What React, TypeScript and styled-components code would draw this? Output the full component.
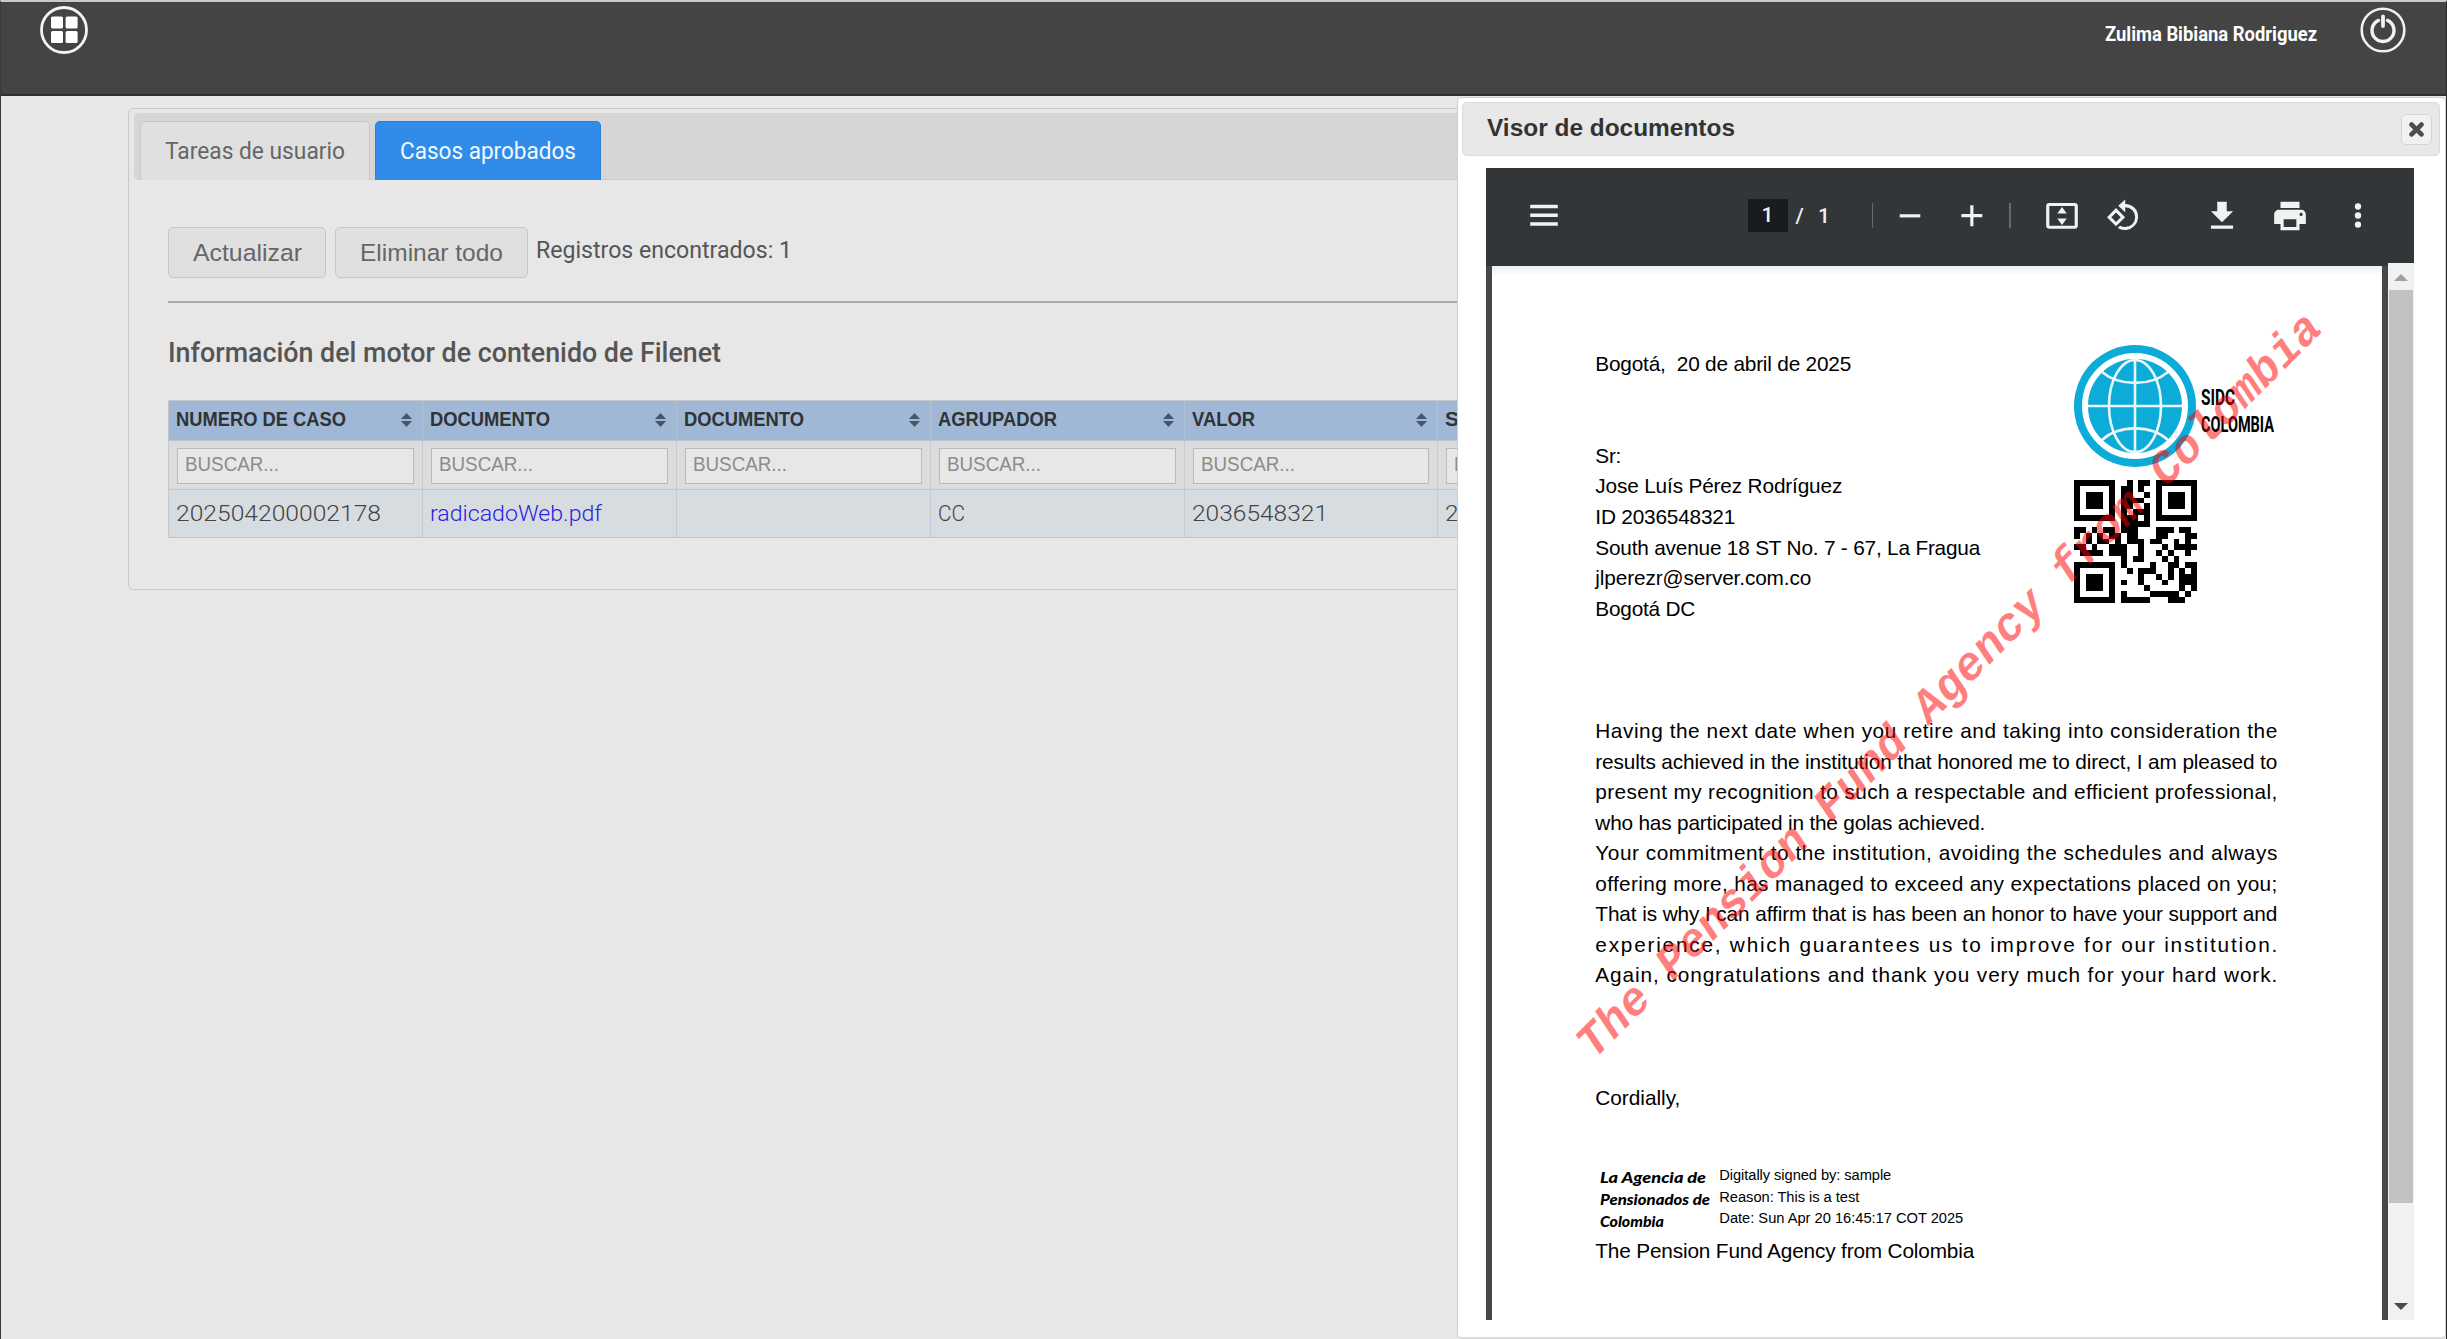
import React, { useLayoutEffect, useRef, useState } from 'react';
import styled, { createGlobalStyle, css } from 'styled-components';

const ARIAL = `'Liberation Sans', Arial, sans-serif`;
const UI = `Roboto, 'Titillium Web', sans-serif`;

const GlobalStyle = createGlobalStyle`
  * { box-sizing: border-box; }
  body { margin: 0; background: #e7e7e7; font-family: ${UI}; overflow: hidden; }
`;

/* ---------- text that fills a given measure ---------- */

const FitBox = styled.span<{ $w: number }>`
  display: inline-block;
  width: ${(p) => p.$w}px;
  white-space: pre;
`;
const FitInner = styled.span`
  display: inline-block;
  transform-origin: 0 50%;
`;

type FitProps = { w: number; mode?: 'scale' | 'space'; children: string };

function Fit({ w, mode = 'scale', children }: FitProps) {
  const ref = useRef<HTMLSpanElement>(null);
  const [style, setStyle] = useState<React.CSSProperties>({});
  useLayoutEffect(() => {
    const natural = ref.current!.getBoundingClientRect().width;
    setStyle(
      mode === 'scale'
        ? { transform: `scaleX(${w / natural})` }
        : { letterSpacing: `${(w - natural) / (children.length - 1)}px` },
    );
  }, []);
  return (
    <FitBox $w={w}>
      <FitInner ref={ref} style={style}>{children}</FitInner>
    </FitBox>
  );
}

/* ---------- shell ---------- */

const Screen = styled.div`
  position: relative;
  width: 2447px;
  height: 1339px;
  display: flex;
  flex-direction: column;
  overflow: hidden;
  background: #e7e7e7;
  border-left: 1px solid #3a3a3a;
  border-right: 1px solid #2a2a2a;
  border-top: 2px solid #c6cac9;
`;
const TopBar = styled.header`
  height: 94px;
  flex: none;
  display: flex;
  justify-content: space-between;
  padding: 3px 39px 0 38px;
  background: #444;
  border-bottom: 2px solid #2f2f2f;
`;
const Account = styled.div`
  display: flex;
  gap: 42px;
`;
const UserName = styled.div`
  padding-top: 16px;
  color: #fff;
  font: 700 20px/26px ${UI};
`;

const Main = styled.main`
  flex: 1;
  padding: 12px 0 0 127px;
`;
const Panel = styled.section`
  width: 2280px;
  height: 482px;
  padding: 4px 4px 4px 5px;
  border: 1.5px solid #c9c9c9;
  border-radius: 5px;
`;
const TabBar = styled.nav`
  height: 67px;
  display: flex;
  gap: 5px;
  padding: 8px 6px 0;
  background: #d6d6d6;
  border-bottom: 1px solid #cbcbcb;
  border-radius: 5px;
`;
const Tab = styled.button<{ $active?: boolean; $w: number }>`
  width: ${(p) => p.$w}px;
  height: 59px;
  padding: 0 0 0 24px;
  text-align: left;
  font: 400 23px/57px ${UI};
  border: 1px solid #c8c8c8;
  border-bottom: 0;
  border-radius: 5px 5px 0 0;
  background: #e0e0e0;
  color: #666;
  ${(p) => p.$active && css`
    background: #308ce8;
    border-color: #2a7fdc;
    color: #f4f8fc;
  `}
`;
const TabBody = styled.div`
  padding: 47px 0 0 34px;
`;
const Actions = styled.div`
  display: flex;
  height: 51px;
  gap: 9px;
`;
const Button = styled.button<{ $w: number }>`
  width: ${(p) => p.$w}px;
  height: 51px;
  padding: 0 0 0 24px;
  text-align: left;
  font: 400 24.5px/46px ${ARIAL};
  color: #666;
  background: #e0e0e0;
  border: 1.5px solid #c6c6c6;
  border-radius: 5px;
`;
const Count = styled.div`
  margin-left: -1px;
  font: 400 23px/48px ${UI};
  color: #555;
`;
const Divider = styled.hr`
  height: 2px;
  margin: 23px 0 0;
  border: 0;
  background: #ababab;
`;
const Heading = styled.h2`
  margin: 33px 0 0;
  height: 64px;
  font: 500 28px/34px ${UI};
  color: #555;
`;

/* ---------- case table ---------- */

const Table = styled.div`
  width: 2031px;
  border-left: 1px solid #c3c8cc;
  border-top: 1px solid #c3c8cc;
`;
const Row = styled.div<{ $h: number; $bg: string; $line: string }>`
  display: grid;
  grid-template-columns: repeat(8, 253.9px);
  height: ${(p) => p.$h}px;
  background: ${(p) => p.$bg};
  border-bottom: 1px solid ${(p) => p.$line};
`;
const HeadCell = styled.div`
  display: flex;
  justify-content: space-between;
  align-items: flex-start;
  padding: 0 9px 0 7px;
  border-right: 1px solid #b3c2d1;
  font: 700 19.5px/36px ${ARIAL};
  color: #2f3336;
  svg { margin-top: 12px; }
`;
const FilterCell = styled.div`
  padding: 7px 8px 0;
  border-right: 1px solid #cacaca;
`;
const FilterField = styled.div`
  height: 36px;
  padding-left: 7px;
  font: 400 19.5px/31px ${ARIAL};
  color: #8c8c8c;
  background: #e7e7e7;
  border: 1.5px solid #b9b9b9;
`;
const DataCell = styled.div<{ $link?: boolean }>`
  padding-left: 7px;
  border-right: 1px solid #c5cacf;
  font: 300 22.5px/46px ${UI};
  color: ${(p) => (p.$link ? '#2a22e0' : '#444')};
`;

/* ---------- document viewer ---------- */

const Dialog = styled.aside`
  position: absolute;
  top: 95px;
  right: 0;
  width: 989px;
  height: 1242px;
  padding: 4px;
  background: #fff;
  border: 1px solid #cfcfcf;
  border-bottom: 2px solid #dcdcdc;
  border-radius: 5px;
`;
const TitleBar = styled.div`
  width: 978px;
  height: 54px;
  display: flex;
  justify-content: space-between;
  padding: 11px 7px 0 24px;
  background: #e8e8e8;
  border: 1px solid #dcdcdc;
  border-radius: 5px;
`;
const Title = styled.h1`
  margin: 0;
  font: 700 24px/28px ${ARIAL};
  color: #333;
`;
const CloseButton = styled.button`
  width: 31px;
  height: 31px;
  padding: 0;
  display: grid;
  place-items: center;
  background: #f1f1f1;
  border: 1px solid #d5d5d5;
  border-radius: 5px;
`;
const Viewer = styled.div`
  width: 928px;
  height: 1152px;
  margin: 12px 0 0 24px;
  display: flex;
  flex-direction: column;
  background: #474747;
`;
const Toolbar = styled.div`
  height: 98px;
  flex: none;
  display: flex;
  align-items: center;
  padding: 0 0 3px 38.5px;
  background: #323639;
  color: #f1f1f1;
  font: 500 21px/32px ${UI};
`;
const Slot = styled.div<{ $gap: number; $w?: number }>`
  width: ${(p) => p.$w ?? 38}px;
  height: 38px;
  margin-left: ${(p) => p.$gap}px;
  flex: none;
`;
const PageInput = styled.div`
  width: 40px;
  height: 33px;
  margin-left: 185px;
  background: #191b1c;
  text-align: center;
`;
const PageTotal = styled.div`
  width: 75px;
  padding-left: 8px;
  word-spacing: 9px;
`;
const Bar = styled.div<{ $gap: number }>`
  width: 1.5px;
  height: 25px;
  margin-left: ${(p) => p.$gap}px;
  background: #666a6d;
`;
const Content = styled.div`
  flex: 1;
  display: flex;
  padding-left: 6px;
`;
const Page = styled.article`
  position: relative;
  width: 890px;
  padding: 83.3px 0 0 103.3px;
  background: linear-gradient(#eceeee, #fff 10px);
  font: 400 20.8px/30.56px ${ARIAL};
  color: #000;
`;
const ScrollBar = styled.div`
  width: 26px;
  margin: -3px 0 0 6px;
  display: flex;
  flex-direction: column;
  align-items: center;
  justify-content: space-between;
  padding: 11px 0 10px;
  background: #f0f1f1;
`;
const Thumb = styled.div`
  width: 24px;
  height: 913px;
  margin: 9px 0 auto;
  background: #c0c1c0;
`;
const Arrow = styled.div<{ $down?: boolean }>`
  width: 14px;
  height: 7px;
  background: ${(p) => (p.$down ? '#4b4b4b' : '#a0a0a0')};
  clip-path: ${(p) => (p.$down ? 'polygon(0 0, 100% 0, 50% 100%)' : 'polygon(50% 0, 100% 100%, 0 100%)')};
`;

const TopBlock = styled.div`
  display: flex;
  height: 366.7px;
`;
const Address = styled.div`
  width: 479px;
`;
const Line = styled.div`
  height: 30.56px;
  white-space: pre;
`;
const Brand = styled.div`
  margin-top: -4px;
`;
const LogoRow = styled.div`
  display: flex;
  gap: 5px;
  height: 135px;
`;
const LogoText = styled.div`
  padding-top: 38.5px;
  font: 700 22px/27.6px ${UI};
`;
const Body = styled.div`
  height: 366.7px;
`;
const Signature = styled.div`
  display: flex;
  gap: 14px;
  height: 65px;
  margin: 52px 0 6px;
  padding-left: 5px;
`;
const Seal = styled.div`
  width: 110px;
  padding-top: 1px;
  font: italic 900 15.5px/22px 'Comic Sans MS', Lato, sans-serif;
`;
const SignInfo = styled.div`
  margin-left: -5px;
  font: 400 14.7px/21.5px ${ARIAL};
`;
const Watermark = styled.div`
  position: absolute;
  left: 102px;
  top: 756px;
  font: italic 700 46.5px/52px 'Liberation Mono', 'Courier New', monospace;
  color: rgba(255, 0, 0, 0.5);
  white-space: pre;
  transform-origin: 0 38px;
  transform: rotate(-45deg);
`;

/* ---------- drawings ---------- */

const AppsIcon = () => (
  <svg width="50" height="50" viewBox="0 0 50 50">
    <circle cx="25" cy="25" r="22.5" fill="none" stroke="#f4f4f4" strokeWidth="2.8" />
    <g fill="#fff">
      <rect x="12" y="11.5" width="12" height="12" rx="1.5" />
      <rect x="26.6" y="11.5" width="12" height="12" rx="1.5" />
      <rect x="12" y="26" width="12" height="12" rx="1.5" />
      <rect x="26.6" y="26" width="12" height="12" rx="1.5" />
    </g>
  </svg>
);

const PowerIcon = () => (
  <svg width="48" height="50" viewBox="0 0 48 50" fill="none" stroke="#f1f1f1">
    <circle cx="24" cy="25" r="21.3" strokeWidth="2.6" />
    <path d="M19.5 15.4a11 11 0 1 0 9 0" strokeWidth="3.4" strokeLinecap="round" />
    <path d="M24 11.5v9.5" strokeWidth="3.8" strokeLinecap="round" />
  </svg>
);

const CloseIcon = () => (
  <svg width="15" height="15" viewBox="0 0 14 14" stroke="#4c4c4c" strokeWidth="4.4" strokeLinecap="round">
    <path d="M2.4 2.4l9.2 9.2M11.6 2.4l-9.2 9.2" />
  </svg>
);

const SortIcon = () => (
  <svg width="13" height="14" viewBox="0 0 13 14" fill="#42576b">
    <path d="M6.5 0L12 6H1zM1 8h11L6.5 14z" />
  </svg>
);

const glyphs: Record<string, string> = {
  menu: 'M3.3 4.9h17.4v2.2H3.3zM3.3 10.4h17.4v2.2H3.3zM3.3 15.9h17.4v2.2H3.3z',
  minus: 'M5.5 10.9h13v2h-13z',
  plus: 'M18.5 12.8h-5.6v5.7h-2v-5.7H5.3v-2h5.6V5.2h2v5.6h5.6z',
  fit: 'M4 3.8h16a2 2 0 0 1 2 2V18a2 2 0 0 1-2 2H4a2 2 0 0 1-2-2V5.8a2 2 0 0 1 2-2zM4 5.7v12.4h16V5.7zM12 6.3l3 4.1H9zM9 13.5h6l-3 4.2z',
  rotate:
    'M7.6 7L1.9 12.8l5.7 5.7 5.7-5.7zM4.6 12.8l3-3 3 3-3 3zM19.1 6.7A8.1 8.1 0 0 0 13.4 4.4V1.6L9 5.5l4.4 4.2V6.4a6.3 6.3 0 0 1 0 12.6c-1.2 0-2.3-.3-3.3-.8l-1.4 1.4a8.2 8.2 0 0 0 10.4-1.3 8.2 8.2 0 0 0 0-11.6z',
  download: 'M19 9h-4V3H9v6H5l7 7 7-7zM5 18v2h14v-2H5z',
  print:
    'M19 8H5c-1.66 0-3 1.34-3 3v6h4v4h12v-4h4v-6c0-1.66-1.34-3-3-3zm-3 11H8v-5h8v5zm3-7c-.55 0-1-.45-1-1s.45-1 1-1 1 .45 1 1-.45 1-1 1zm-1-9H6v4h12V3z',
  more:
    'M12 4a2 2 0 1 0 0 4 2 2 0 0 0 0-4zM12 9.7a2 2 0 1 0 0 4 2 2 0 0 0 0-4zM12 15.4a2 2 0 1 0 0 4 2 2 0 0 0 0-4z',
};
const Glyph = ({ name, gap }: { name: string; gap: number }) => (
  <Slot $gap={gap}>
    <svg width="38" height="38" viewBox="0 0 24 24" fill="#f1f3f3" fillRule="evenodd">
      <path d={glyphs[name]} />
    </svg>
  </Slot>
);

const Globe = () => (
  <svg width="122" height="122" viewBox="0 0 122 122" fill="none">
    <circle cx="61" cy="61" r="61" fill="#0cabd8" />
    <circle cx="61" cy="61" r="50" stroke="#fff" strokeWidth="6" />
    <g stroke="#e8f8fc" strokeWidth="2.6">
      <path d="M61 15v92M14 61h94" />
      <ellipse cx="61" cy="61" rx="26" ry="46" />
      <path d="M28 27c17 14.5 49 14.5 66 0M28 95c17-15.5 49-15.5 66 0" />
    </g>
  </svg>
);

const QR_ROWS = [
  '#######..#.##.#######',
  '#.....#.##.#..#.....#',
  '#.###.#.##..#.#.###.#',
  '#.###.#.####..#.###.#',
  '#.###.#.##..#.#.###.#',
  '#.....#.#.###.#.....#',
  '#######.###.#.#######',
  '........#####........',
  '##.#.##.###...###.##.',
  '#.#.#.##.##...##...##',
  '..#.##.#.###.##..#.#.',
  '##.#..###..#...#.####',
  '.####.###..#..#.#..#.',
  '........#.##...#.#...',
  '#######.#....#..##.##',
  '#.....#..#.###..#.#.#',
  '#.###.#....#..#.#.###',
  '#.###.#.#..#...#..###',
  '#.###.#.....#.....#.#',
  '#.....#.#....#####.#.',
  '#######.#####...###..',
];
const QrCode = () => (
  <svg width="123" height="123" viewBox="0 0 21 21" shapeRendering="crispEdges">
    {QR_ROWS.map((row, y) =>
      [...row].map((c, x) => (c === '#' ? <rect key={`${x}-${y}`} x={x} y={y} width="1" height="1" /> : null)),
    )}
  </svg>
);

/* ---------- data ---------- */

const columns = [
  { name: 'NUMERO DE CASO', w: 170, value: '202504200002178', vw: 205 },
  { name: 'DOCUMENTO', w: 120, value: 'radicadoWeb.pdf', vw: 172, link: true },
  { name: 'DOCUMENTO', w: 120, value: '', vw: 0 },
  { name: 'AGRUPADOR', w: 119, value: 'CC', vw: 27 },
  { name: 'VALOR', w: 63, value: '2036548321', vw: 136 },
  { name: 'SERIE', w: 62, value: '2025', vw: 54 },
];

const address = [
  ['Bogotá,  20 de abril de 2025', 256],
  ['', 0],
  ['', 0],
  ['Sr:', 26],
  ['Jose Luís Pérez Rodríguez', 247],
  ['ID 2036548321', 140],
  ['South avenue 18 ST No. 7 - 67, La Fragua', 385],
  ['jlperezr@server.com.co', 216],
  ['Bogotá DC', 100],
] as [string, number][];

const letter = [
  ['Having the next date when you retire and taking into consideration the', 682],
  ['results achieved in the institution that honored me to direct, I am pleased to', 682],
  ['present my recognition to such a respectable and efficient professional,', 682],
  ['who has participated in the golas achieved.', 390],
  ['Your commitment to the institution, avoiding the schedules and always', 682],
  ['offering more, has managed to exceed any expectations placed on you;', 682],
  ['That is why I can affirm that is has been an honor to have your support and', 682],
  ['experience, which guarantees us to improve for our institution.', 682],
  ['Again, congratulations and thank you very much for your hard work.', 682],
] as [string, number][];

export default function App() {
  return (
    <Screen>
      <GlobalStyle />
      <TopBar>
        <AppsIcon />
        <Account>
          <UserName><Fit w={212}>Zulima Bibiana Rodriguez</Fit></UserName>
          <PowerIcon />
        </Account>
      </TopBar>

      <Main>
        <Panel>
          <TabBar>
            <Tab $w={230}><Fit w={180}>Tareas de usuario</Fit></Tab>
            <Tab $w={226} $active><Fit w={176}>Casos aprobados</Fit></Tab>
          </TabBar>
          <TabBody>
            <Actions>
              <Button $w={158}><Fit w={109}>Actualizar</Fit></Button>
              <Button $w={193}><Fit w={143}>Eliminar todo</Fit></Button>
              <Count><Fit w={256}>Registros encontrados: 1</Fit></Count>
            </Actions>
            <Divider />
            <Heading><Fit w={553}>Información del motor de contenido de Filenet</Fit></Heading>
            <Table>
              <Row $h={40} $bg="#a0b8d5" $line="#b9c4d0">
                {columns.map((c, i) => (
                  <HeadCell key={i}><Fit w={c.w}>{c.name}</Fit><SortIcon /></HeadCell>
                ))}
              </Row>
              <Row $h={49} $bg="#dcdcdc" $line="#c5c9cc">
                {columns.map((_, i) => (
                  <FilterCell key={i}><FilterField><Fit w={94}>BUSCAR...</Fit></FilterField></FilterCell>
                ))}
              </Row>
              <Row $h={48} $bg="#d7dce1" $line="#c0c5c8">
                {columns.map((c, i) => (
                  <DataCell key={i} $link={c.link}>{c.value && <Fit w={c.vw}>{c.value}</Fit>}</DataCell>
                ))}
              </Row>
            </Table>
          </TabBody>
        </Panel>
      </Main>

      <Dialog>
        <TitleBar>
          <Title><Fit w={248}>Visor de documentos</Fit></Title>
          <CloseButton><CloseIcon /></CloseButton>
        </TitleBar>
        <Viewer>
          <Toolbar>
            <Glyph name="menu" gap={0} />
            <PageInput>1</PageInput>
            <PageTotal>/ 1</PageTotal>
            <Bar $gap={9} />
            <Glyph name="minus" gap={18} />
            <Glyph name="plus" gap={24} />
            <Bar $gap={18} />
            <Glyph name="fit" gap={32} />
            <Glyph name="rotate" gap={23} />
            <Glyph name="download" gap={61} />
            <Glyph name="print" gap={30} />
            <Glyph name="more" gap={30} />
          </Toolbar>
          <Content>
            <Page>
              <TopBlock>
                <Address>
                  {address.map(([t, w], i) => (
                    <Line key={i}>{t && <Fit w={w} mode="space">{t}</Fit>}</Line>
                  ))}
                </Address>
                <Brand>
                  <LogoRow>
                    <Globe />
                    <LogoText>
                      <div><Fit w={34}>SIDC</Fit></div>
                      <div><Fit w={73}>COLOMBIA</Fit></div>
                    </LogoText>
                  </LogoRow>
                  <QrCode />
                </Brand>
              </TopBlock>
              <Body>
                {letter.map(([t, w], i) => (
                  <Line key={i}><Fit w={w} mode="space">{t}</Fit></Line>
                ))}
              </Body>
              <Line><Fit w={85} mode="space">Cordially,</Fit></Line>
              <Signature>
                <Seal>
                  <div><Fit w={106}>La Agencia de</Fit></div>
                  <div><Fit w={110}>Pensionados de</Fit></div>
                  <div><Fit w={64}>Colombia</Fit></div>
                </Seal>
                <SignInfo>
                  <div><Fit w={172} mode="space">Digitally signed by: sample</Fit></div>
                  <div><Fit w={140} mode="space">Reason: This is a test</Fit></div>
                  <div><Fit w={244} mode="space">Date: Sun Apr 20 16:45:17 COT 2025</Fit></div>
                </SignInfo>
              </Signature>
              <Line><Fit w={379} mode="space">The Pension Fund Agency from Colombia</Fit></Line>
              <Watermark>The Pension Fund Agency from Colombia</Watermark>
            </Page>
            <ScrollBar>
              <Arrow />
              <Thumb />
              <Arrow $down />
            </ScrollBar>
          </Content>
        </Viewer>
      </Dialog>
    </Screen>
  );
}
